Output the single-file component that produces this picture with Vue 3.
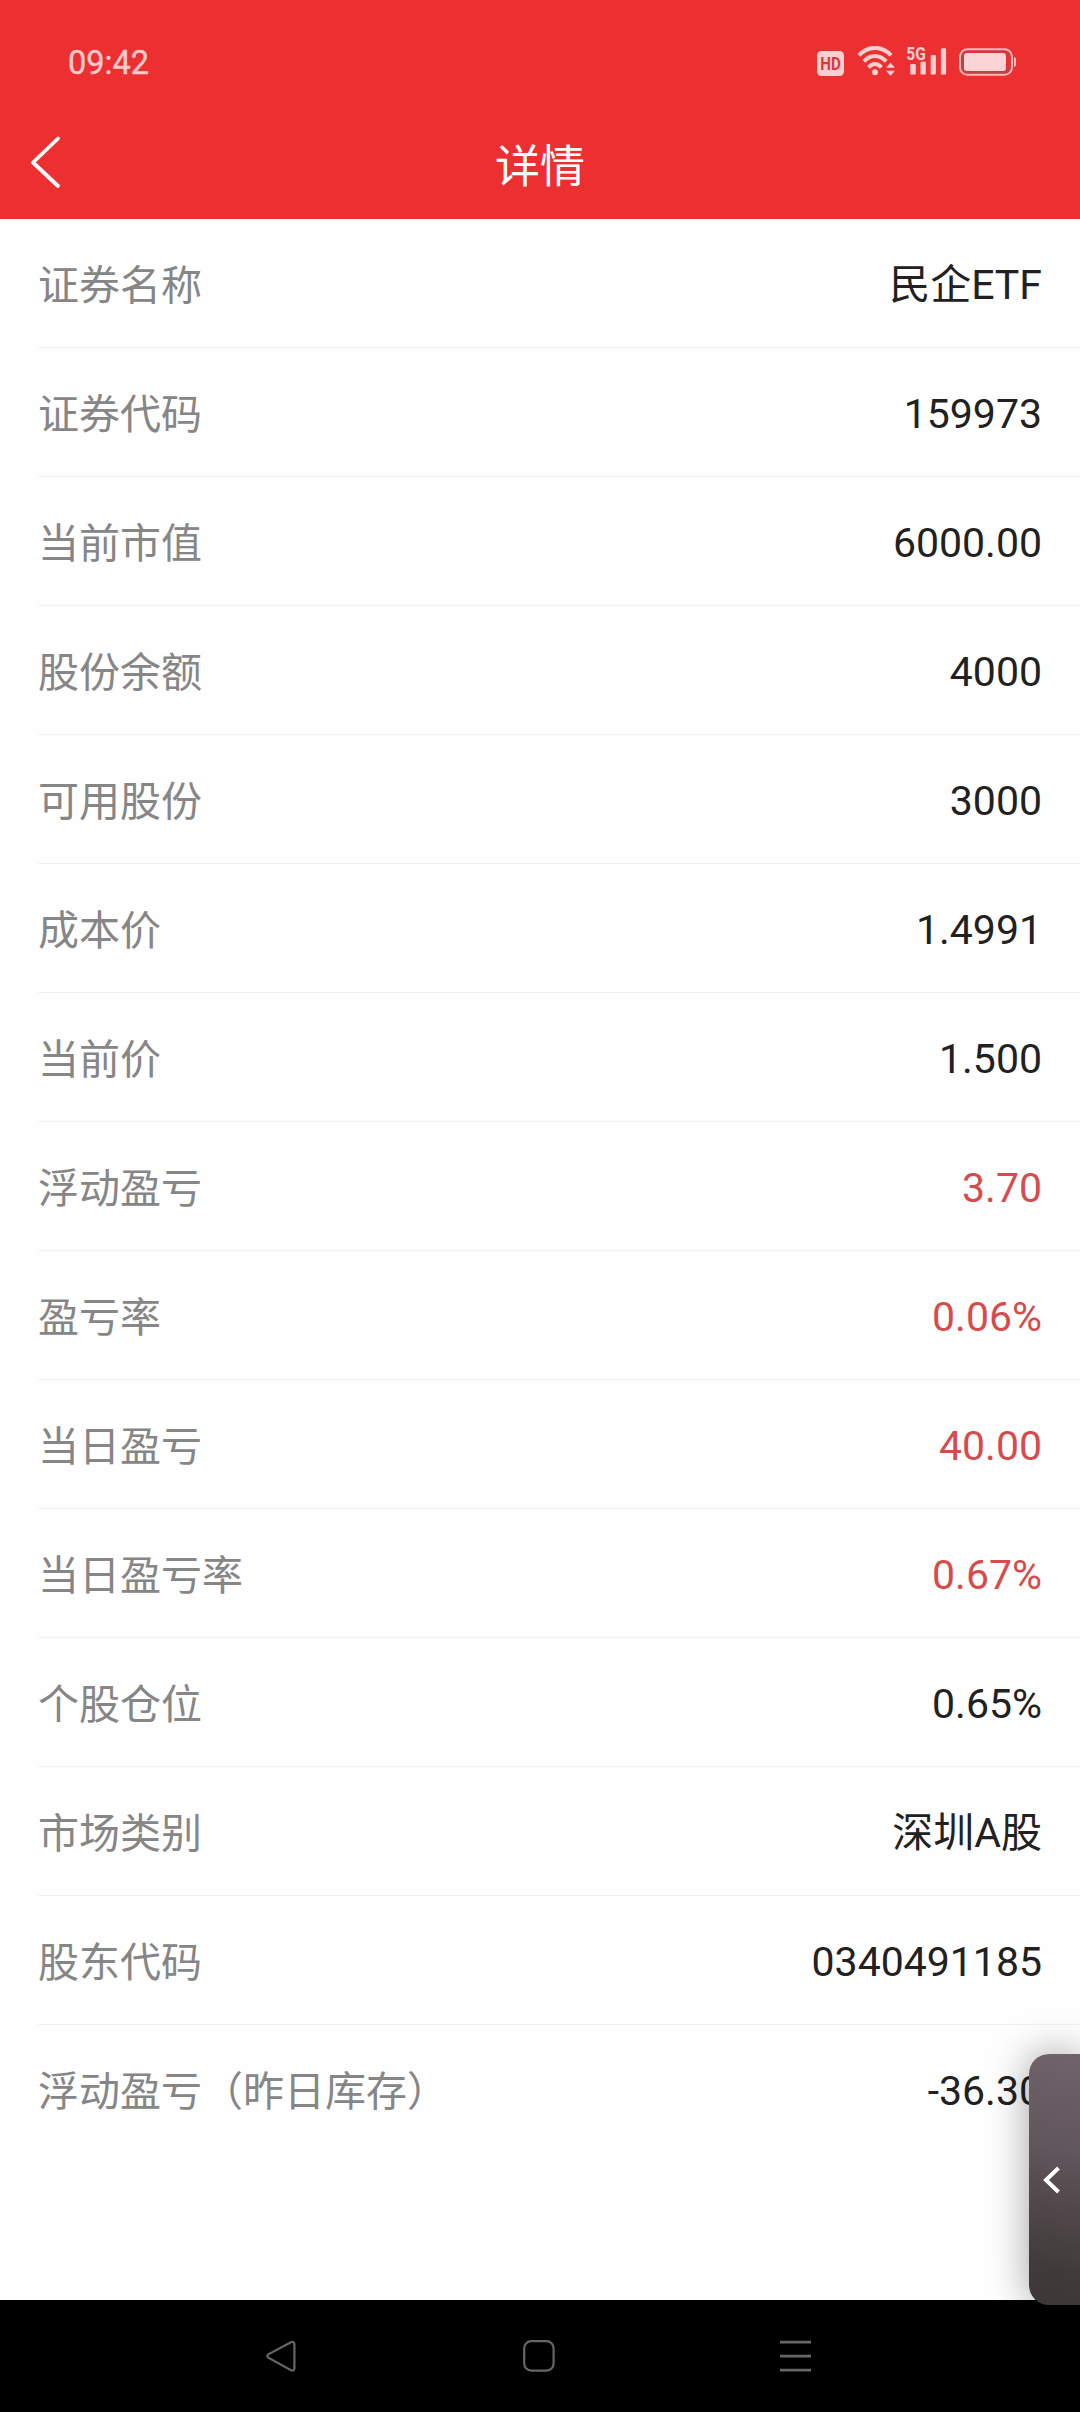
<script setup>
const rows = [
    { label: '证券名称', value: '民企ETF' },
    { label: '证券代码', value: '159973' },
    { label: '当前市值', value: '6000.00' },
    { label: '股份余额', value: '4000' },
    { label: '可用股份', value: '3000' },
    { label: '成本价', value: '1.4991' },
    { label: '当前价', value: '1.500' },
    { label: '浮动盈亏', value: '3.70', rise: true },
    { label: '盈亏率', value: '0.06%', rise: true },
    { label: '当日盈亏', value: '40.00', rise: true },
    { label: '当日盈亏率', value: '0.67%', rise: true },
    { label: '个股仓位', value: '0.65%' },
    { label: '市场类别', value: '深圳A股' },
    { label: '股东代码', value: '0340491185' },
    { label: '浮动盈亏（昨日库存）', value: '-36.30' },
]
</script>

<template>
    <div class="screen">
        <header class="header">
            <div class="status-bar">
                <span class="time">09:42</span>
                <div class="status-icons">
                    <svg class="hd" width="27" height="33" viewBox="0 -4 27 33">
                        <rect width="27" height="25" rx="4.5" fill="#fccfd0" />
                        <text x="3.3" y="19.2" textLength="20.5" lengthAdjust="spacingAndGlyphs" fill="#d8393d">HD</text>
                    </svg>
                    <svg class="wifi" width="39" height="32" viewBox="0 1.2 39 32">
                        <g fill="none" stroke="#fccfd0" stroke-width="4">
                            <path d="M2 10.5 C11 0.6 25 0.6 34 10.5" />
                            <path d="M6.8 16.6 C13.5 9.4 22.5 9.4 29.2 16.6" />
                            <path d="M11.6 22.6 C15.5 18.2 20.5 18.2 24.4 22.6" />
                        </g>
                        <circle cx="18" cy="27.5" r="3" fill="#fccfd0" />
                        <path d="M29 23 L33.5 18 L38 23 Z M29 26 L33.5 31 L38 26 Z" fill="#fccfd0" />
                    </svg>
                    <svg class="signal" width="41" height="42" viewBox="0 -6 41 42">
                        <text x="0.3" y="13.3" textLength="19.5" lengthAdjust="spacingAndGlyphs" fill="#fccfd0">5G</text>
                        <g fill="#fccfd0">
                            <rect x="4.3" y="17" width="5.5" height="10.6" rx="1.2" />
                            <rect x="14.5" y="14.6" width="5.3" height="13" rx="1.2" />
                            <rect x="24.7" y="8" width="5.2" height="19.6" rx="1.2" />
                            <rect x="34.9" y="1.3" width="5.2" height="26.3" rx="1.2" />
                        </g>
                    </svg>
                    <svg class="battery" width="58" height="28" viewBox="0 0 58 28">
                        <rect x="1" y="1.2" width="52" height="25.6" rx="7.5" fill="none" stroke="#fbb9bb" stroke-width="2" />
                        <rect x="3.4" y="3.6" width="47.2" height="20.8" rx="5" fill="none" stroke="#b8474c" stroke-width="1.6" />
                        <rect x="5" y="5" width="42" height="18" rx="3" fill="#fcd4d5" />
                        <path d="M55 9 Q57 9.5 57 11 V17 Q57 18.5 55 19 Z" fill="#fbb9bb" />
                    </svg>
                </div>
            </div>
            <div class="nav">
                <svg class="back" width="32" height="54" viewBox="0 0 32 54">
                    <path d="M28 3.5 L3 27.5 L28 51" fill="none" stroke="#fff" stroke-width="3.8" stroke-linecap="round" stroke-linejoin="round" />
                </svg>
                <h1 class="title">详情</h1>
            </div>
        </header>

        <main class="list">
            <div v-for="row in rows" :key="row.label" class="row">
                <span class="label">{{ row.label }}</span>
                <span :class="['value', { rise: row.rise }]">{{ row.value }}</span>
            </div>
        </main>

        <footer class="system-nav">
            <svg width="32" height="32" viewBox="0 0 32 32">
                <path d="M26 2.2 L3.3 14.3 Q1.3 16 3.3 17.7 L26 30.3 Q29.4 31.3 29.4 28 V4.5 Q29.4 1.2 26 2.2 Z" />
            </svg>
            <svg width="32" height="32" viewBox="0 0 32 32">
                <rect x="1.2" y="1.2" width="29.4" height="29.4" rx="7" />
            </svg>
            <svg width="32" height="32" viewBox="0 0 32 32">
                <path d="M0 2.2 H31 M0 16.2 H31 M0 30.2 H31" stroke-width="2.8" />
            </svg>
        </footer>

        <!-- edge handle floating over the page -->
        <div class="side-handle">
            <svg width="18" height="28" viewBox="0 0 18 28">
                <path d="M15.5 2 L3 14 L15.5 26" fill="none" stroke="#fff" stroke-width="4" />
            </svg>
        </div>
    </div>
</template>

<style>
body {
    margin: 0;
    background: #fff;
}
</style>

<style scoped>
.screen {
    position: relative;
    display: flex;
    flex-direction: column;
    width: 1080px;
    height: 2412px;
    overflow: hidden;
    background: #fefefe;
    font-family: Roboto, "Noto Sans CJK SC", sans-serif;
}

.header {
    flex: none;
    box-sizing: border-box;
    height: 219px;
    background: #ec2f31;
}

.status-bar {
    display: flex;
    justify-content: space-between;
    align-items: center;
    height: 109px;
    padding: 0 63px 0 68px;
}

.time {
    padding-top: 16px;
    font-size: 32.5px;
    line-height: 38px;
    color: #fcc9cb;
    -webkit-text-stroke: 0.4px #fcc9cb;
}

.status-icons {
    display: flex;
    align-items: center;
    padding-top: 15px;
}

.status-icons text {
    font-family: Roboto, sans-serif;
    font-size: 18.5px;
    font-weight: 700;
}

.hd {
    margin-right: 13px;
    margin-top: 2px;
}

.wifi {
    margin-right: 10px;
}

.signal {
    margin-right: 12px;
}

.nav {
    display: grid;
    grid-template-columns: 1fr auto 1fr;
    align-items: center;
    height: 110px;
}

.back {
    margin-left: 30px;
    margin-bottom: 4px;
}

.title {
    margin: 0;
    padding-top: 7px;
    font-size: 45px;
    font-weight: 400;
    line-height: 60px;
    color: #fff;
}

.list {
    flex: 1;
    padding-left: 38px;
}

.row {
    display: flex;
    justify-content: space-between;
    align-items: center;
    box-sizing: border-box;
    height: 129px;
    padding-top: 4px;
    padding-right: 38px;
    border-bottom: 1px solid #f1f1f1;
    font-size: 41px;
    line-height: 56px;
}

.row:last-child {
    border-bottom-color: transparent;
}

.label {
    padding-top: 2px;
    color: #868686;
}

.value {
    color: #212121;
}

.value.rise {
    color: #d64b4b;
}

.system-nav {
    flex: none;
    display: flex;
    align-items: center;
    justify-content: space-between;
    box-sizing: border-box;
    height: 112px;
    padding: 0 268px 0 265px;
    background: #000;
}

.system-nav svg {
    fill: none;
    stroke: #666;
    stroke-width: 2.2;
}

.side-handle {
    position: absolute;
    top: 2054px;
    right: 0;
    display: flex;
    align-items: center;
    box-sizing: border-box;
    width: 51px;
    height: 251px;
    padding-left: 14px;
    border-radius: 20px 0 0 20px;
    background: linear-gradient(192deg, #70636a 0%, #61565c 38%, #51484b 60%, #403b3a 85%, #3c3837 100%);
    box-shadow: 0 0 40px rgba(0, 0, 0, 0.38);
}
</style>
